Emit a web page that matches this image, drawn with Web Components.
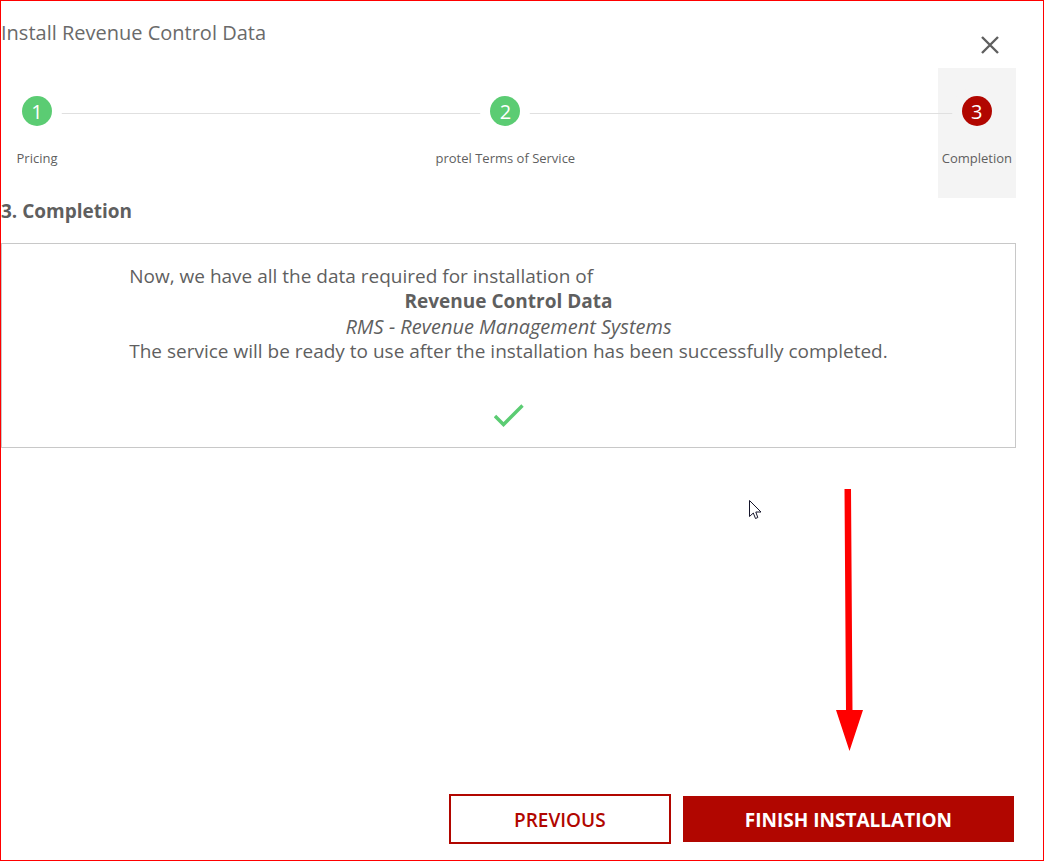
<!DOCTYPE html>
<html lang="en">
<head>
<meta charset="utf-8">
<meta name="viewport" content="width=device-width, initial-scale=1">
<title>Install Revenue Control Data</title>
<style>
  body { margin: 0; font-family: "Open Sans", sans-serif; font-size: 19px; line-height: 25px; color: #5f5f5f; background: #fff; }
</style>
</head>
<body>
<install-wizard>
  <wizard-header slot="header">Install Revenue Control Data</wizard-header>
  <wizard-stepper>
    <wizard-step number="1">Pricing</wizard-step>
    <wizard-step number="2">protel Terms of Service</wizard-step>
    <wizard-step number="3" current>Completion</wizard-step>
  </wizard-stepper>
  <completion-panel>
    <span slot="heading">3. Completion</span>
    <span slot="intro">Now, we have all the data required for installation of</span>
    <span slot="product">Revenue Control Data</span>
    <span slot="category">RMS - Revenue Management Systems</span>
    <span slot="note">The service will be ready to use after the installation has been successfully completed.</span>
  </completion-panel>
  <wizard-button slot="actions" kind="outline">PREVIOUS</wizard-button>
  <wizard-button slot="actions" kind="solid">FINISH INSTALLATION</wizard-button>
  <pointer-overlay slot="overlay"></pointer-overlay>
</install-wizard>

<script>
const define = (name, markup, setup) => {
  const template = document.createElement('template');
  template.innerHTML = markup;
  customElements.define(name, class extends HTMLElement {
    constructor() {
      super();
      this.attachShadow({ mode: 'open' }).append(template.content.cloneNode(true));
    }
    connectedCallback() { if (setup) setup(this, this.shadowRoot); }
  });
};

define('install-wizard', `
  <style>
    :host { display: flex; flex-direction: column; box-sizing: border-box; min-height: 100vh; position: relative; border: 1px solid #f00; padding: 0 27px 16px 0; }
    main { flex: 1; }
    footer { display: flex; justify-content: flex-end; align-items: center; gap: 12px; padding-right: 2px; }
  </style>
  <slot name="header"></slot>
  <main><slot></slot></main>
  <footer><slot name="actions"></slot></footer>
  <slot name="overlay"></slot>`);

define('wizard-header', `
  <style>
    :host { display: block; }
    header { display: flex; justify-content: space-between; align-items: flex-start; height: 67px; box-sizing: border-box; padding: 19px 2px 0 0; }
    h1 { margin: 0; font-size: 20px; font-weight: 400; line-height: 25px; color: #6a6a6a; }
    button { width: 48px; height: 50px; padding: 0; border: 0; background: none; color: #5f5f5f; display: grid; place-items: center; }
    svg { display: block; }
  </style>
  <header>
    <h1><slot></slot></h1>
    <button type="button" aria-label="Close">
      <svg width="18" height="18" viewBox="0 0 18 18" fill="none" stroke="currentColor" stroke-width="2.4"><path d="M1 1 17 17M17 1 1 17"/></svg>
    </button>
  </header>`);

define('wizard-stepper', `
  <style>
    :host { display: flex; justify-content: space-between; position: relative; }
    .rail { position: absolute; top: 45px; left: 36px; right: 39px; height: 1px; background: #e0e0e0; z-index: 1; }
  </style>
  <div class="rail"></div>
  <slot></slot>`);

define('wizard-step', `
  <style>
    :host { --surface: #fff; --dot: #5bcc73; display: flex; flex-direction: column; align-items: center; box-sizing: border-box; min-width: 72px; height: 130px; padding: 28px 4px 0; gap: 23px; background: var(--surface); }
    :host([current]) { --surface: #f4f4f4; --dot: #b10600; }
    .dot { position: relative; z-index: 2; width: 30px; height: 30px; border-radius: 50%; background: var(--dot); box-shadow: 0 0 0 10px var(--surface); color: #fff; font-size: 20px; line-height: 31px; text-align: center; }
    .label { font-size: 13px; line-height: 18px; white-space: nowrap; }
  </style>
  <div class="dot"></div>
  <div class="label"><slot></slot></div>`,
  (host, root) => { root.querySelector('.dot').textContent = host.getAttribute('number'); });

define('completion-panel', `
  <style>
    :host { display: block; }
    h2 { margin: 1px 0 19px; font-size: 19px; line-height: 25px; font-weight: 700; }
    section { box-sizing: border-box; border: 1px solid #c8c8c8; padding: 20px 16px 19px; display: flex; flex-direction: column; align-items: center; }
    p { margin: 0; }
    .center { text-align: center; }
    .product { font-weight: 700; }
    .category { font-style: italic; font-size: 20px; }
    svg { display: block; margin-top: 40px; }
  </style>
  <h2><slot name="heading"></slot></h2>
  <section>
    <div>
      <p><slot name="intro"></slot></p>
      <p class="center product"><slot name="product"></slot></p>
      <p class="center category"><slot name="category"></slot></p>
      <p><slot name="note"></slot></p>
    </div>
    <svg width="30" height="24" viewBox="0 0 30 24" fill="none" stroke="#5bcc73" stroke-width="3.4" aria-hidden="true"><path d="M1 12 9.500 20.500 28.500 1.500"/></svg>
  </section>`);

define('wizard-button', `
  <style>
    :host { display: block; }
    button { display: block; margin: 0; padding: 2px 62px 0; border: 0; border-radius: 0; font: 700 19px/44px "Open Sans", sans-serif; background: #b10600; color: #fff; white-space: nowrap; }
    :host([kind="outline"]) button { min-width: 222px; background: #fff; color: #b10600; border: 2px solid #b10600; font-weight: 600; }
  </style>
  <button type="button"><slot></slot></button>`);

define('pointer-overlay', `
  <style>
    :host { display: block; position: absolute; inset: 0; pointer-events: none; }
    svg { position: absolute; }
    .cursor { right: 281px; top: 499px; }
    .arrow { right: 180px; bottom: 109px; }
  </style>
  <svg class="cursor" width="13" height="20" viewBox="0 0 13 20" aria-hidden="true"><path d="M.5.5V16.500L4.300 13 6.500 18.500 8.800 17.500 6.800 12H12Z" fill="#fff" stroke="#15152a"/></svg>
  <svg class="arrow" width="28" height="262" viewBox="0 0 28 262" fill="#f00" aria-hidden="true"><path d="M9.500 0H16L17.500 221H28L14.500 262 1 221H11Z"/></svg>`);
</script>
</body>
</html>
